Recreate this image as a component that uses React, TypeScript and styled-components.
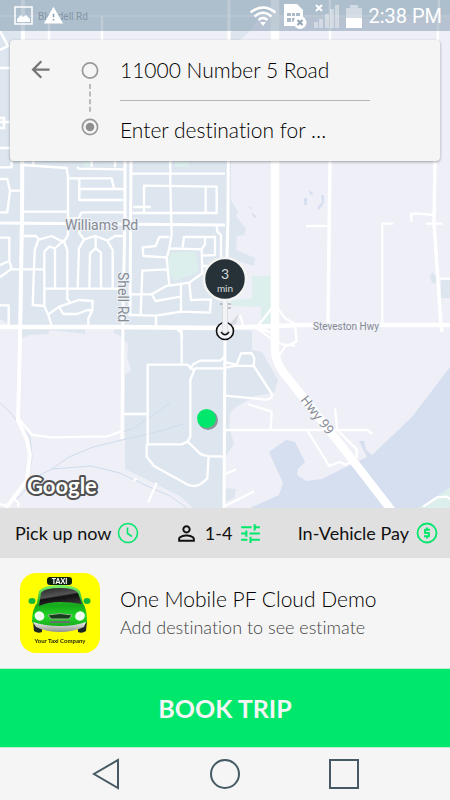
import React from "react";
import styled, { createGlobalStyle } from "styled-components";
import { MdArrowBack, MdPersonOutline, MdTune, MdWarning } from "react-icons/md";

const GlobalStyle = createGlobalStyle`
  *, *::before, *::after { box-sizing: border-box; }
  body { margin: 0; background: #f5f5f5; }
  button, input { font: inherit; color: inherit; border: 0; padding: 0; margin: 0; background: none; }
  button { cursor: pointer; }
  svg { display: block; flex-shrink: 0; }
`;

const Page = styled.div`
  display: flex;
  flex-direction: column;
  min-height: 100vh;
  background: #f5f5f5;
  color: #111;
  font-family: Lato, "Open Sans", sans-serif;
  font-variant-ligatures: none;
`;

const MapSection = styled.section`
  position: relative;
  flex: 1;
  min-height: 400px;
  overflow: hidden;
  background: #eeeff7;
`;

const MapCanvas = styled.svg`
  position: absolute;
  inset: 0;
  width: 100%;
  height: 100%;
`;

const StatusBar = styled.header`
  position: relative;
  display: flex;
  align-items: center;
  justify-content: space-between;
  height: 31px;
  padding: 0 8px 0 14px;
  background: rgba(120, 145, 165, 0.47);
  color: #fff;
`;

const StatusGroup = styled.div<{ $gap: number }>`
  display: flex;
  align-items: center;
  gap: ${(p) => p.$gap}px;
`;

const Time = styled.time`
  font: 400 20px/24px Roboto, sans-serif;
`;

const RouteCard = styled.form`
  position: relative;
  display: flex;
  gap: 21px;
  margin: 9px 10px 0;
  padding: 16px 14px 17px 17px;
  border-radius: 4px;
  background: #f5f5f5;
  box-shadow: 0 1px 3px rgba(0, 0, 0, 0.35);
`;

const BackButton = styled.button`
  align-self: flex-start;
  margin-right: 6px;
  color: #757575;
`;

const Fields = styled.div`
  display: flex;
  flex-direction: column;
  flex: 1;
  max-width: 250px;
`;

const Field = styled.input`
  width: 100%;
  height: 28px;
  outline: none;
  font-size: 21px;
  font-weight: 300;
  line-height: 28px;
  color: #000;
  text-overflow: ellipsis;

  &::placeholder {
    color: #000;
    opacity: 1;
  }
`;

const Divider = styled.hr`
  width: 100%;
  height: 1px;
  margin: 16px 0 15px;
  border: 0;
  background: #b5b5b5;
`;

const OptionsBar = styled.div`
  display: flex;
  align-items: center;
  justify-content: space-between;
  height: 50px;
  padding: 0 11px 0 15px;
  background: #e0e0e0;
`;

const OptionButton = styled.button`
  display: flex;
  align-items: center;
  gap: 6px;
  color: #111;
  font-size: 18px;
  line-height: 24px;
`;

const Accent = styled.span`
  display: flex;
  color: #00e76c;
`;

const Provider = styled.article`
  display: flex;
  align-items: center;
  gap: 20px;
  height: 110px;
  padding: 0 20px;
`;

const ProviderText = styled.div`
  display: flex;
  flex-direction: column;
`;

const ProviderName = styled.h1`
  margin: 0;
  font-size: 21px;
  font-weight: 300;
  line-height: 28px;
  color: #000;
`;

const ProviderNote = styled.p`
  margin: 0;
  font-size: 18px;
  font-weight: 300;
  line-height: 28px;
  color: #444;
`;

const BookButton = styled.button`
  height: 80px;
  border-top: 1px solid #b9f0d0;
  border-bottom: 1px solid #b9f0d0;
  background: #00e86c;
  color: #f5f5f5;
  font-size: 25px;
  font-weight: 700;
  line-height: 32px;
`;

const NavBar = styled.nav`
  display: flex;
  align-items: center;
  justify-content: space-between;
  height: 52px;
  padding: 0 90px;
  color: #455a64;
`;

const NavButton = styled.button`
  display: flex;
  color: inherit;
`;

function CityMap() {
  return (
    <MapCanvas viewBox="0 0 450 508" preserveAspectRatio="xMidYMid slice" role="img" aria-label="Map">
      <rect width="450" height="508" fill="#eeeff7" />

      {/* built-up land */}
      <g fill="#dde6ef">
        <path d="M0 0H450V15L410 18 395 14 380 20 330 15 260 15 250 31 240 40H231V31H22V60H231V200L238 212 236 216 246 229 244 235 237 236 236 250 255 258 254 266 235 260 228 262V328L252 331V350L262 352 278 380 274 393 255 396 236 407 230 413 229 428 234 443 225 458V508H193L180 496 125 469V375L131 370 127 356 128 344 120 336 114 333V327H85V334L78 333 50 330 48 334 30 335 22 338 22 331 10 325 0 319Z" />
        <path d="M430 277L432 272 437 278V284L432 283Z M441 280H450V298H441Z M225 488L236 489 234 498 225 502Z" />
      </g>

      {/* water */}
      <g fill="#d5dff0">
        <path d="M450 367L412 417 372 455 366 450 364 441H359L367 457 340 470 322 479 306 481 297 475 298 469 305 462 295 442 286 440 269 452 283 483 279 495 250 508H450Z" />
        <path d="M309 190L314 194 310 195Z M304 198H307V205H304Z M321 195H324V203L319 210 317 208 322 202Z M249 207L253 208 250 209Z M251 212L257 217 254 218Z" />
      </g>

      {/* parks */}
      <g fill="#dcefed">
        <path d="M168 261L172 252 196 252 198 272 175 281 170 275Z M252 276H271V325H261V307L231 306V300L252 299Z M85 162H90V167H84Z M175 162H189V167H175Z M418 508L435 498 450 487V508Z" />
      </g>

      {/* streams */}
      <g fill="none" stroke="#cfdcec" strokeWidth="1">
        <path d="M16 500L40 475 52 469 69 457 93 447 122 440 160 431 183 424 M122 432L134 428 150 417 170 403 M52 469L91 466 120 473 145 485 170 496 187 508" />
        <path d="M0 403L9 411 20 425 30 437 32 457 29 476 8 507" />
      </g>

      {/* roads north of Williams Rd */}
      <g fill="none" stroke="#fff" strokeWidth="2.5">
        <path d="M49 16V40 M102 16V40 M0 31L8 46 0 50 M0 68H10 M0 118H4V128H0 M0 122H10 M0 148H22 M330 0V160 M439 0L437 60" />
        <path d="M0 16H450" opacity="0.5" />
      </g>

      {/* western residential streets */}
      <g transform="translate(0 160) scale(0.3333)" fill="none" stroke="#fff" strokeWidth="7" strokeLinejoin="round">
        <path d="M0 22H35V0 M0 57H22L30 92 22 157H0 M30 92H62 M100 0V15 M70 15L200 24 204 50V225L192 245 178 240 155 228 115 240 104 270 98 435 133 438 145 465 155 497 M70 155H204 M232 20L235 26 375 28 M275 20V0 M345 22V0 M207 55H335L342 85 M238 57V120H370 M238 87H373" />
        <path d="M204 175H235L245 157H373 M238 172V220L252 238 287 228 322 242 345 228H372 M252 238L237 265 233 385 M322 242L338 270V388 M287 228V265L270 280 268 385 M287 265L303 278V385 M70 228H108L118 240 M192 240L165 265 148 260 133 275V435 M165 265V385 M190 240L202 270V420 M133 386H370" />
        <path d="M0 233H28V303L0 315 M28 303L35 326 0 352 M35 328H133 M0 436H26V497 M145 463L178 440 237 420 278 423 277 452 263 450 232 462H190L178 442 M277 452L265 475V497 M200 415L210 428" />
        <path d="M393 41H675 M400 141H452 M432 157V77L650 80V160 M617 80V158 M397 159H652 M511 0V70L515 225 508 265 500 295 508 375 495 380 455 403 467 423 542 410 M508 231H478L467 258 428 262 430 288 500 292 M508 265L605 268 607 340 568 368 508 377 M500 328L427 332 422 465 M390 403H460 M548 262L552 231H645V285L608 287 M605 268L615 253V233 M650 195L652 215 663 225V300 M605 318H625" />
        <path d="M390 465L468 467 543 455 630 458 633 418 573 420 568 368 M468 467V497 M543 375V455 M530 505L545 520V540" />
      </g>

      {/* southern streets */}
      <g transform="translate(0 330) scale(0.3333)" fill="none" stroke="#fff" strokeWidth="7" strokeLinejoin="round">
        <path d="M55 265L97 315 155 322 322 319 367 303 M367 252H440 M545 0V100 M443 343V104H562L582 122 571 150V320L563 335 545 343H443M440 343V380L462 408 565 465Q590 473 605 460L622 445 626 379 M563 335L603 373 627 379H670 M571 150L585 115H670 M570 118L580 103 600 92H660L675 80" />
        <path d="M445 517L470 458 M402 452L410 445" />
        <path d="M0 522L20 528 M40 505L55 518V532" />
        <path d="M675 96L710 105 723 70 755 69 763 85 761 108 710 107 675 113 M761 108L816 192Q818 207 798 209L675 197 M675 300H1102L1117 312 M743 222L815 245 812 298 M923 303L988 408 1018 396 1037 404 1070 385 M1005 235L1012 300 1070 358V385 M675 432L708 418 M675 528L763 484 M1270 530L1312 502 1340 500 1360 514" />
      </g>

      {/* eastern streets */}
      <g transform="translate(225 160) scale(0.3333)" fill="none" stroke="#fff" strokeWidth="7" strokeLinejoin="round">
        <path d="M243 198H310 M472 490 472 490V191H505 M559 186V162L572 160 628 165 M603 191H652 M643 356H675 M45 465L55 500 95 505 M140 445L105 490 95 500 137 518 M155 440L180 475 210 492 215 545 180 560 160 590 M95 505L145 540 170 553 210 557" />
      </g>

      {/* main roads */}
      <g fill="none" stroke="#fff" strokeWidth="4">
        <path d="M23 0L22 217 20 340 18 420 27 440 30 455 27 480 6 508" />
        <path d="M0 223L225 225" strokeWidth="3" />
        <path d="M0 327L110 327 225 328 275 326 300 325 450 325" strokeWidth="4.5" />
        <path d="M125 160V217L123 310 122 439 M131 160L130 316 M229 0L228 220 225 328 224 508" strokeWidth="3" />
        <path d="M330 160L328 325 M435 160L434 223 441 325 442 332" strokeWidth="3.5" />
        <path d="M275 0V350Q275 360 283 372L333 435 358 467 392 511" strokeWidth="8.5" />
      </g>

      <g fill="#868b94" fontFamily="Roboto, sans-serif">
        <text x="38" y="20" fontSize="10" fill="#8d9aa8">Blundell Rd</text>
        <text x="65" y="230" fontSize="14" stroke="#eef2f6" strokeWidth="2" paintOrder="stroke">Williams Rd</text>
        <text x="313" y="330" fontSize="10" stroke="#eeeff7" strokeWidth="2" paintOrder="stroke">Steveston Hwy</text>
        <text transform="translate(118 272) rotate(90)" fontSize="14" stroke="#eef2f6" strokeWidth="2" paintOrder="stroke">Shell Rd</text>
        <text transform="translate(300 400) rotate(52)" fontSize="13" fontFamily="Noto Sans, sans-serif">Hwy 99</text>
      </g>

      <text
        x="27" y="494" fontFamily="Lato, sans-serif" fontWeight="700" fontSize="22"
        fill="#fff" stroke="#505050" strokeWidth="4" strokeLinejoin="round" paintOrder="stroke"
      >
        Google
      </text>

      {/* available vehicle */}
      <circle cx="208" cy="420" r="10" fill="#8c959b" />
      <circle cx="206.5" cy="418.5" r="9.5" fill="#00e76c" />

      {/* pickup pin */}
      <path d="M228 326L239 313 236 324Z" fill="#b9bfc5" opacity="0.4" />
      <path d="M220 304H231 M222 308H231" stroke="#8b9096" strokeWidth="1" />
      <circle cx="225" cy="331" r="8.5" fill="#f3f5f7" stroke="#111" strokeWidth="1.6" />
      <rect x="222.500" y="298" width="5" height="35" rx="2" fill="#f3f4f5" stroke="#ced2d6" strokeWidth="0.6" />
      <path d="M221 332Q225 337.500 229 332" fill="none" stroke="#111" strokeWidth="1.4" />
      <circle cx="225" cy="279" r="21" fill="#263238" stroke="#f4f4f2" strokeWidth="2.5" />
      <g fill="#d8dcde" fontFamily="Lato, sans-serif" textAnchor="middle">
        <text x="225" y="279" fontSize="14">3</text>
        <text x="225" y="292" fontSize="10">min</text>
      </g>
    </MapCanvas>
  );
}

function PictureIcon() {
  return (
    <svg width="19" height="19" viewBox="0 0 19 19" fill="none" aria-hidden="true">
      <rect x="1" y="1" width="17" height="17" stroke="#fff" strokeWidth="1.5" />
      <path d="M3 16V13L7 9 9 11 12 9 16 13V16Z" fill="#fff" />
    </svg>
  );
}

function WifiIcon() {
  return (
    <svg width="28" height="24" viewBox="0 0 28 24" fill="none" stroke="#fff" strokeWidth="2.4" aria-hidden="true">
      <path d="M1.5 8.5Q14-1.500 26.500 8.500M5.500 12.500Q14 5 22.500 12.500M9.500 16Q14 12 18.500 16" />
      <path d="M11 18H17L14 22Z" fill="#fff" stroke="none" />
    </svg>
  );
}

function SimIcon() {
  return (
    <svg width="24" height="26" viewBox="0 0 24 26" aria-hidden="true">
      <path d="M1 1H14L20 7V23H1Z" fill="#fff" />
      <path d="M4 10H8V13H4Z M9 10H12V13H9Z M13 10H17V13H13Z M4 15H8V19H4Z M9 15H12V19H9Z" fill="#adbbc8" />
      <circle cx="17" cy="19.500" r="6.500" fill="#fff" />
      <path d="M14.500 17L19.500 22M19.500 17L14.500 22" stroke="#92a3b2" strokeWidth="2" />
    </svg>
  );
}

function SignalIcon() {
  return (
    <svg width="27" height="24" viewBox="0 0 27 24" aria-hidden="true">
      <path d="M1 18H5V24H1Z M6 15H10V24H6Z M12 10H16V24H12Z M17 5H21V24H17Z M22 1H26V24H22Z" fill="#fff" opacity="0.4" />
      <path d="M3 1L9 7M9 1L3 7" stroke="#fff" strokeWidth="2" />
    </svg>
  );
}

function BatteryIcon() {
  return (
    <svg width="16" height="24" viewBox="0 0 16 24" aria-hidden="true">
      <path d="M4 1H12V4H16V14H0V4H4Z" fill="#fff" opacity="0.45" />
      <path d="M0 14H16V24H0Z" fill="#fff" />
    </svg>
  );
}

function RouteMarkers() {
  return (
    <svg width="18" height="80" viewBox="0 0 18 80" fill="none" stroke="#999" aria-hidden="true">
      <circle cx="9" cy="14.500" r="7.600" strokeWidth="1.700" />
      <path d="M9 28V56" strokeWidth="1.700" stroke="#b0b0b0" strokeDasharray="5 2.600" />
      <circle cx="9" cy="71" r="7.600" strokeWidth="1.700" />
      <circle cx="9" cy="71" r="4.300" fill="#8f8f8f" stroke="none" />
    </svg>
  );
}

function ClockIcon() {
  return (
    <svg width="22" height="22" viewBox="0 0 22 22" fill="none" stroke="currentColor" strokeWidth="1.6" aria-hidden="true">
      <circle cx="11" cy="11" r="9.500" />
      <path d="M10.500 5.500V11.500L15 14.500" />
    </svg>
  );
}

function PayIcon() {
  return (
    <svg width="24" height="24" viewBox="0 0 24 24" fill="none" stroke="currentColor" aria-hidden="true">
      <circle cx="12" cy="12" r="9.500" strokeWidth="1.800" />
      <path d="M15 8.700H10V12H14V15.300H9M12 6.500V8.500M12 15.500V17.500" strokeWidth="1.900" strokeLinejoin="round" />
    </svg>
  );
}

function TaxiLogo() {
  return (
    <svg width="80" height="80" viewBox="0 0 80 80" role="img" aria-label="Your Taxi Company">
      <defs>
        <filter id="soft" x="-10%" y="-10%" width="120%" height="120%">
          <feGaussianBlur stdDeviation="0.700" />
        </filter>
        <linearGradient id="body" x1="0" y1="0" x2="0" y2="1">
          <stop offset="0" stopColor="#7bf06a" />
          <stop offset="0.450" stopColor="#16a81c" />
          <stop offset="0.700" stopColor="#22d827" />
          <stop offset="1" stopColor="#12981a" />
        </linearGradient>
        <linearGradient id="glass" x1="0" y1="0" x2="0.400" y2="1">
          <stop offset="0" stopColor="#222" />
          <stop offset="0.500" stopColor="#555" />
          <stop offset="0.600" stopColor="#101010" />
          <stop offset="1" stopColor="#333" />
        </linearGradient>
        <linearGradient id="bumper" x1="0" y1="0" x2="0" y2="1">
          <stop offset="0" stopColor="#f0f0ea" />
          <stop offset="1" stopColor="#8f9290" />
        </linearGradient>
      </defs>
      <rect width="80" height="80" rx="16" fill="#ff0" />
      <g filter="url(#soft)">
        <path d="M13 48H22V59Q18 61 14 58Z M58 48H67L66 58Q62 61 58 59Z" fill="#1d2520" />
        <ellipse cx="12" cy="28" rx="3.500" ry="3" fill="#14b839" />
        <ellipse cx="67" cy="28" rx="3.500" ry="3" fill="#14b839" />
        <path d="M17 30L19 18Q24 12 40 12Q55 12 60 18L63 30Q67 36 67 49Q62 56 40 57Q18 56 12 49Q12 36 17 30Z" fill="url(#body)" />
        <path d="M21 20Q24 15 40 15Q55 15 58 20L62 31Q50 29 40 29Q28 29 19 33Z" fill="url(#glass)" />
        <path d="M13 49Q25 53 40 53Q55 53 66 49L64 54Q53 59 40 59Q26 59 16 54Z" fill="url(#bumper)" />
        <path d="M28 42Q40 39 52 42L49 46H31Z" fill="#183c1b" stroke="#91b58c" strokeWidth="1" />
        <path d="M30 49H50" stroke="#68716b" strokeWidth="2" />
        <ellipse cx="19.500" cy="43" rx="5" ry="4.500" fill="#f2fff0" transform="rotate(30 19.500 43)" />
        <ellipse cx="60" cy="43" rx="5" ry="4.500" fill="#f2fff0" transform="rotate(-30 60 43)" />
        <rect x="27" y="4" width="25" height="8" rx="3" fill="#10200f" />
        <text x="39.500" y="10.500" textAnchor="middle" fontFamily="Lato, sans-serif" fontWeight="900" fontSize="7" fill="#fff">TAXI</text>
        <text x="40" y="70" textAnchor="middle" fontFamily="Lato, sans-serif" fontWeight="700" fontSize="6" fill="#262600">Your Taxi Company</text>
      </g>
    </svg>
  );
}

export default function App() {
  return (
    <Page>
      <GlobalStyle />
      <MapSection>
        <CityMap />
        <StatusBar>
          <StatusGroup $gap={10}>
            <PictureIcon />
            <MdWarning size={21} />
          </StatusGroup>
          <StatusGroup $gap={6}>
            <WifiIcon />
            <SimIcon />
            <SignalIcon />
            <BatteryIcon />
            <Time>2:38 PM</Time>
          </StatusGroup>
        </StatusBar>
        <RouteCard onSubmit={(e) => e.preventDefault()}>
          <BackButton type="button" aria-label="Back">
            <MdArrowBack size={27} />
          </BackButton>
          <RouteMarkers />
          <Fields>
            <Field aria-label="Pickup address" defaultValue="11000 Number 5 Road" />
            <Divider />
            <Field aria-label="Destination" placeholder="Enter destination for …" />
          </Fields>
        </RouteCard>
      </MapSection>
      <OptionsBar>
        <OptionButton type="button">
          Pick up now
          <Accent><ClockIcon /></Accent>
        </OptionButton>
        <OptionButton type="button">
          <MdPersonOutline size={25} />
          1-4
          <Accent><MdTune size={25} /></Accent>
        </OptionButton>
        <OptionButton type="button">
          In-Vehicle Pay
          <Accent><PayIcon /></Accent>
        </OptionButton>
      </OptionsBar>
      <Provider>
        <TaxiLogo />
        <ProviderText>
          <ProviderName>One Mobile PF Cloud Demo</ProviderName>
          <ProviderNote>Add destination to see estimate</ProviderNote>
        </ProviderText>
      </Provider>
      <BookButton type="button">BOOK TRIP</BookButton>
      <NavBar aria-label="System navigation">
        <NavButton type="button" aria-label="Back">
          <svg width="32" height="32" viewBox="0 0 32 32" fill="none" stroke="currentColor" strokeWidth="2">
            <path d="M28 2V30L4 16Z" />
          </svg>
        </NavButton>
        <NavButton type="button" aria-label="Home">
          <svg width="32" height="32" viewBox="0 0 32 32" fill="none" stroke="currentColor" strokeWidth="2">
            <circle cx="16" cy="16" r="14" />
          </svg>
        </NavButton>
        <NavButton type="button" aria-label="Recent apps">
          <svg width="32" height="32" viewBox="0 0 32 32" fill="none" stroke="currentColor" strokeWidth="2">
            <rect x="2" y="2" width="28" height="28" />
          </svg>
        </NavButton>
      </NavBar>
    </Page>
  );
}
